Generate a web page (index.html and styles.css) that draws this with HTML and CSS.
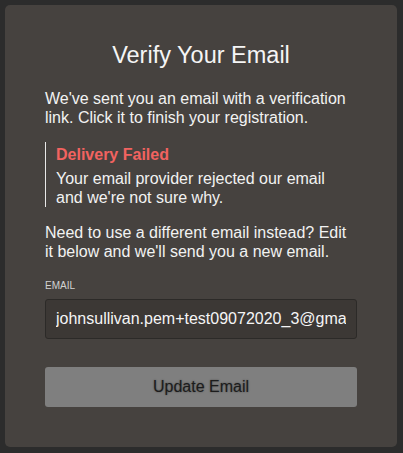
FILE: index.html
```html
<!DOCTYPE html>
<html>
<head>
<meta charset="utf-8">
<link rel="stylesheet" href="styles.css">
</head>
<body>
<div class="card">
  <h1 class="title">Verify Your Email</h1>
  <p class="text intro">We've sent you an email with a verification link. Click it to finish your registration.</p>
  <div class="notice">
    <div class="notice-title">Delivery Failed</div>
    <div class="notice-body">Your email provider rejected our email and we're not sure why.</div>
  </div>
  <p class="text edit">Need to use a different email instead? Edit it below and we'll send you a new email.</p>
  <label class="label" for="email">EMAIL</label>
  <input class="input" id="email" type="text" value="johnsullivan.pem+test09072020_3@gmail.com" readonly>
  <button class="btn">Update Email</button>
</div>
</body>
</html>
```
FILE: styles.css
```css
html, body {
  margin: 0;
  padding: 0;
  background: #2c2c2c;
  font-family: "Liberation Sans", Arial, sans-serif;
  color: #f2f2f2;
}
body {
  padding: 5px 6px 6px 5px;
}
.card {
  background: #46423f;
  border-radius: 5px;
  padding: 36px 40px 40px 40px;
  display: flex;
  flex-direction: column;
}
.title {
  margin: 0;
  font-weight: normal;
  font-size: 23.5px;
  line-height: 28px;
  text-align: center;
  color: #f5f5f5;
}
.text {
  margin: 0;
  font-size: 16px;
  line-height: 19px;
}
.intro {
  margin-top: 20px;
}
.notice {
  margin-top: 15px;
  border-left: 1px solid #e8e8e8;
  padding: 3px 24px 0 10px;
}
.notice-title {
  color: #f26360;
  font-weight: bold;
  font-size: 16px;
  line-height: 19px;
}
.notice-body {
  margin-top: 5px;
  font-size: 16px;
  line-height: 19px;
}
.edit {
  margin-top: 16px;
}
.label {
  margin-top: 19px;
  font-size: 10px;
  line-height: 12px;
  color: #d2d2d2;
}
.input {
  margin: 7px 0 0 0;
  height: 40px;
  box-sizing: border-box;
  border: 1px solid #2c2a28;
  border-radius: 3px;
  background: #3c3835;
  padding: 0 10px;
  font-family: "Liberation Sans", Arial, sans-serif;
  font-size: 16px;
  color: #f5f5f5;
  outline: none;
}
.btn {
  margin-top: 28px;
  height: 40px;
  border: none;
  border-radius: 3px;
  background: #7f7f7f;
  font-family: "Liberation Sans", Arial, sans-serif;
  font-size: 16px;
  color: #1c1c1c;
  text-shadow: 0 0 2px rgba(0,0,0,0.45);
  padding: 0;
}
```
